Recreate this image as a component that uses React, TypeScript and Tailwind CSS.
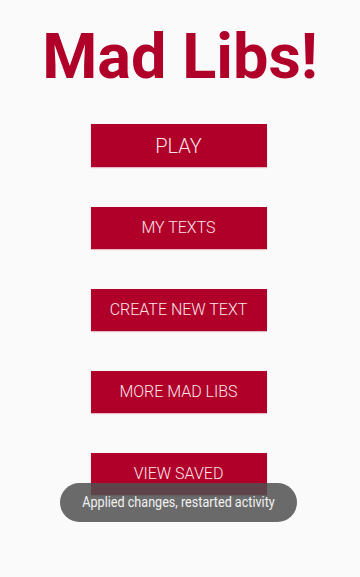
import React from "react";

const buttons = ["MY TEXTS", "CREATE NEW TEXT", "MORE MAD LIBS", "VIEW SAVED"];

export default function App() {
  return (
    <div
      className="relative w-[360px] h-[577px] bg-[#fafafa] overflow-hidden flex flex-col items-center"
      style={{ fontFamily: "Roboto, 'Noto Sans', sans-serif" }}
    >
      <h1 className="mt-[26px] text-[63px] leading-[62px] font-bold text-[#b0002a]">
        Mad Libs!
      </h1>
      <div className="mt-[36px] mr-[3px] flex flex-col items-center gap-[40px]">
        <button className="w-[176px] h-[43px] bg-[#b0002a] text-[#fbe4e8] text-[20px] font-light shadow-[0_1px_1px_rgba(176,0,42,0.25)] flex items-center justify-center">
          PLAY
        </button>
        {buttons.map((b) => (
          <button
            key={b}
            className="w-[176px] h-[42px] bg-[#b0002a] text-[#fbe4e8] text-[16px] font-light shadow-[0_1px_1px_rgba(176,0,42,0.25)] flex items-center justify-center"
          >
            {b}
          </button>
        ))}
      </div>
      <div className="absolute left-[60px] top-[483px] w-[237px] h-[39px] rounded-full bg-[rgba(80,80,80,0.85)] flex items-center justify-center text-[#f2f2f2]">
        <span className="inline-block text-[15px] scale-x-[0.84] whitespace-nowrap">
          Applied changes, restarted activity
        </span>
      </div>
    </div>
  );
}
